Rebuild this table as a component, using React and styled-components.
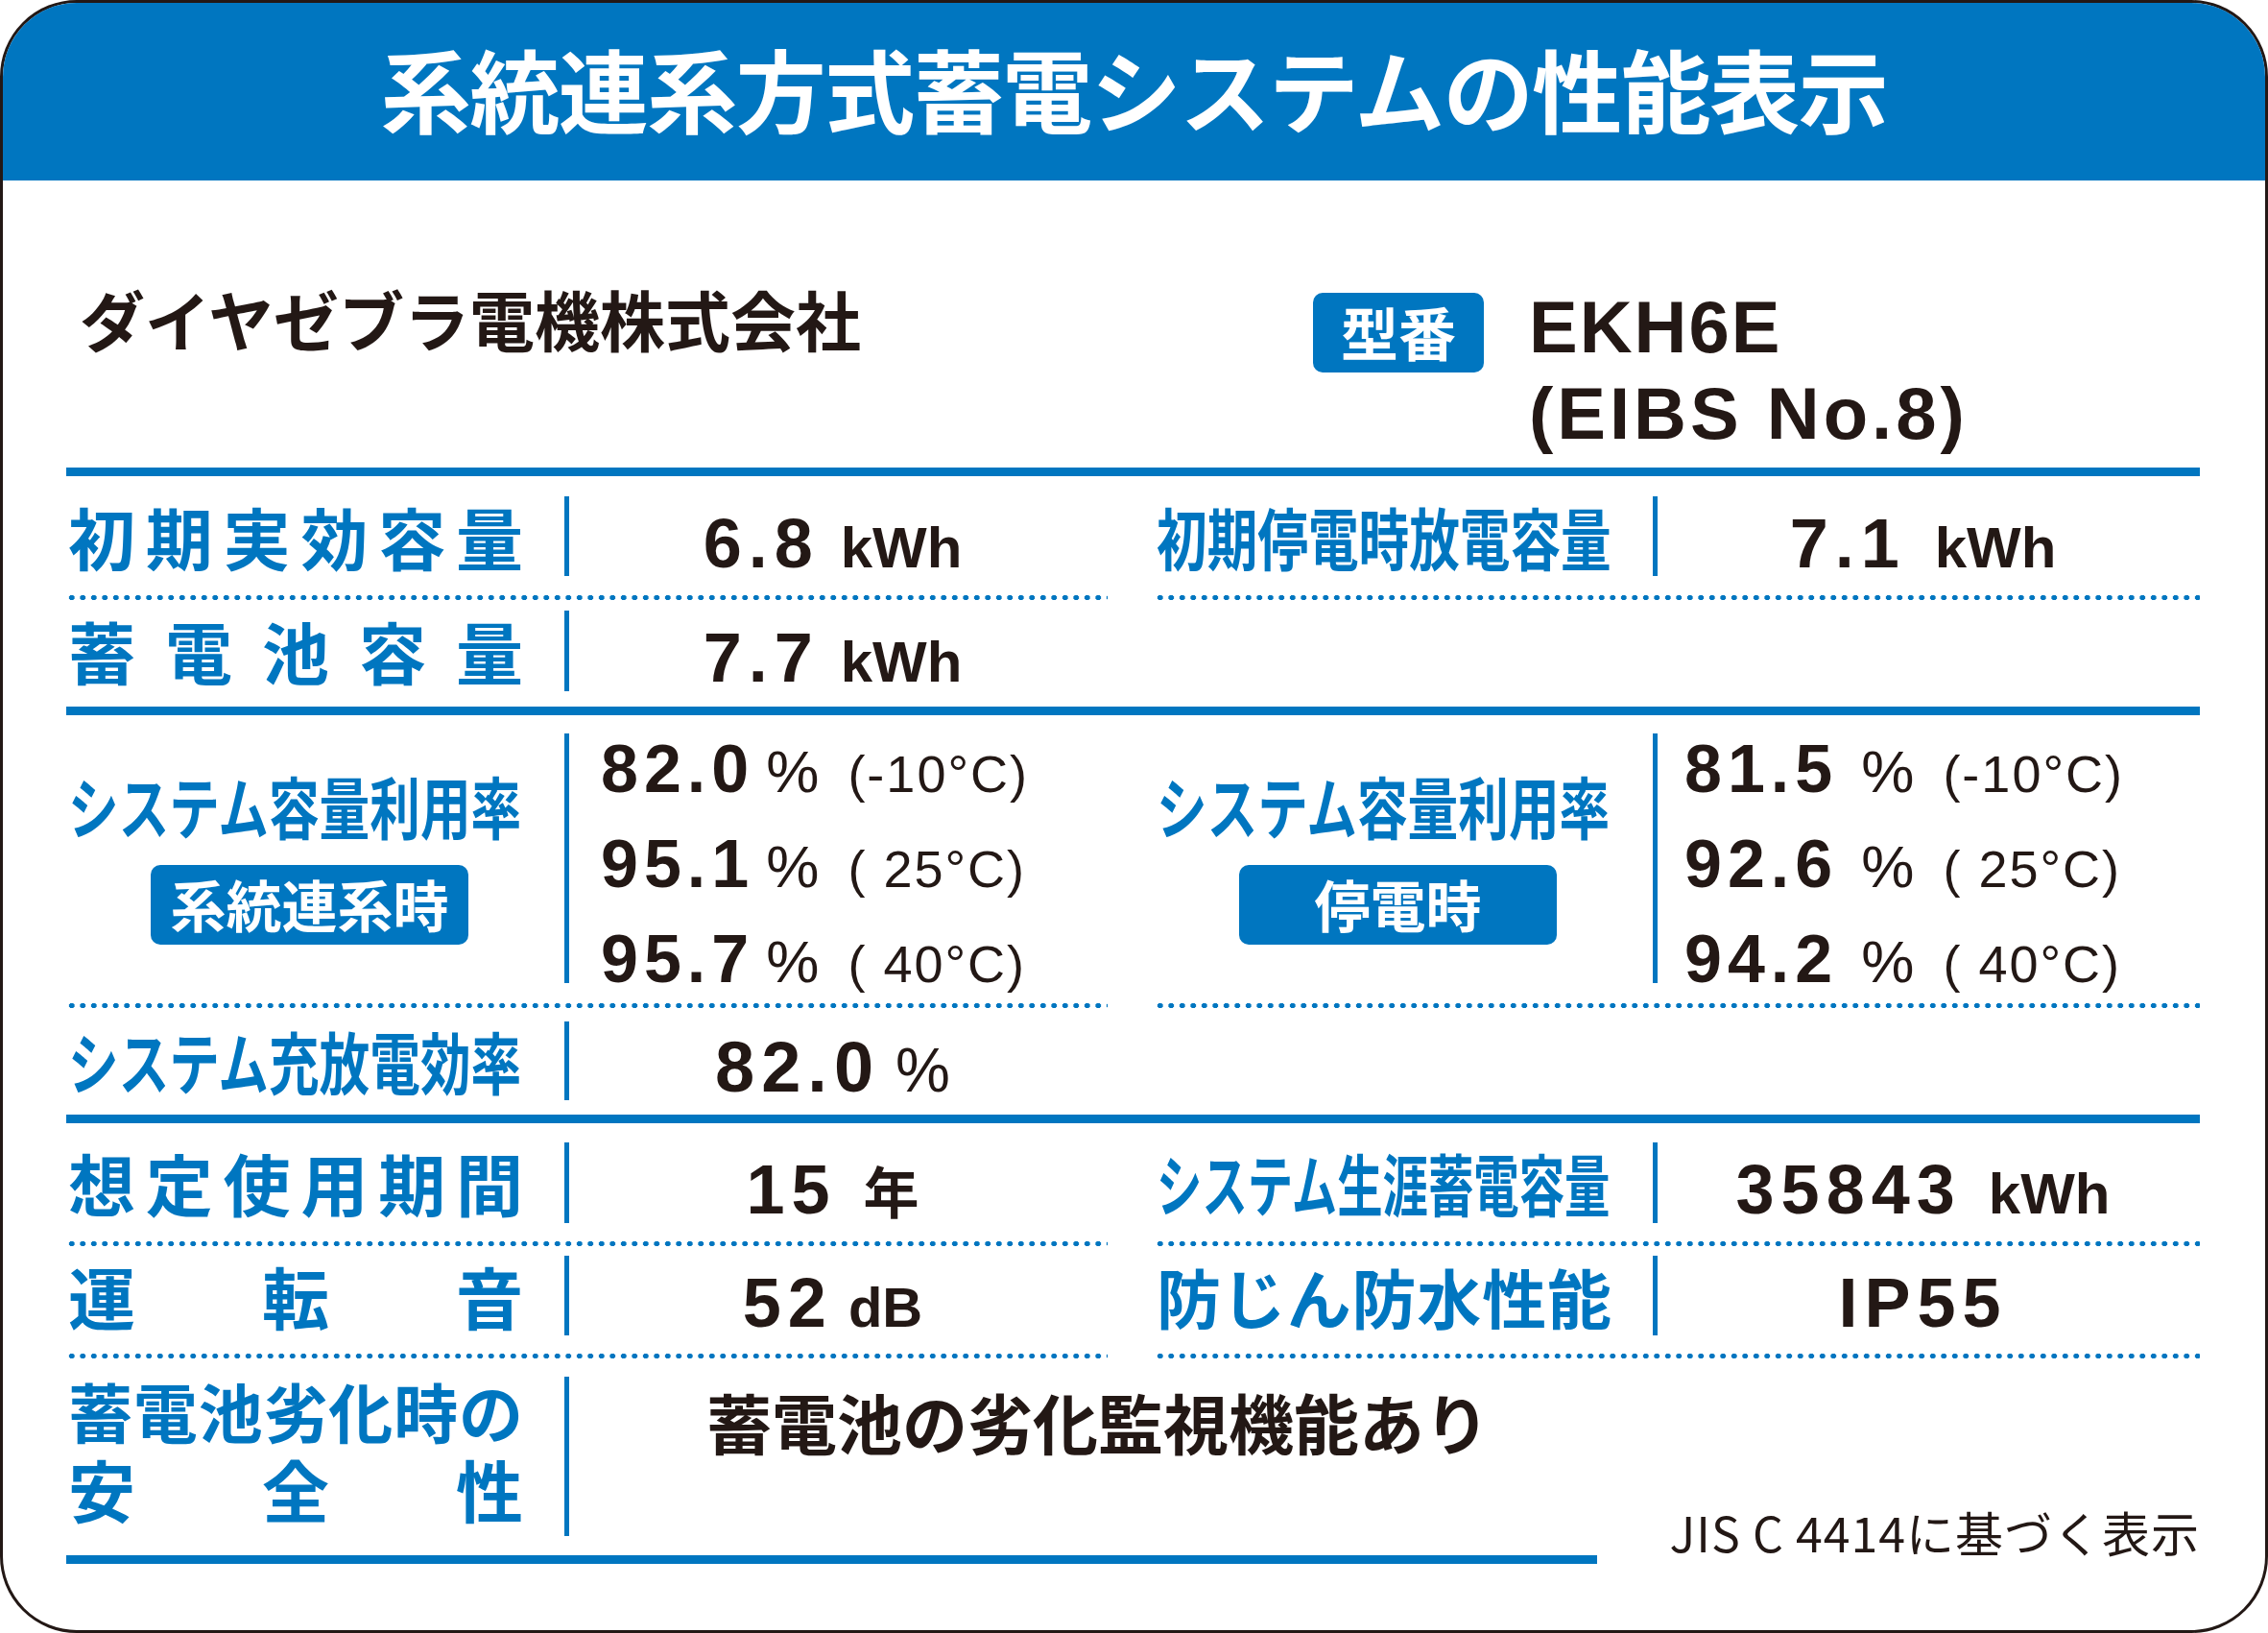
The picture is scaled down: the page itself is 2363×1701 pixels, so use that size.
import React from 'react'
import styled, { createGlobalStyle } from 'styled-components'

const BLUE = '#0076c0'
const INK = '#231815'
const CJK = '"Noto Sans CJK JP", "Noto Sans", sans-serif'
const LATIN = '"Liberation Sans", "Noto Sans CJK JP", sans-serif'

const Global = createGlobalStyle`
    html, body {
        margin: 0;
        padding: 0;
        background: #fff;
    }
    body {
        width: 2363px;
        height: 1701px;
        overflow: hidden;
    }
`

const Card = styled.div`
    width: 2363px;
    height: 1701px;
    box-sizing: border-box;
    border: 3px solid ${INK};
    border-radius: 80px;
    overflow: hidden;
    background: #fff;
    display: flex;
    flex-direction: column;
`

const Header = styled.header`
    height: 185px;
    flex-shrink: 0;
    background: ${BLUE};
    display: flex;
    align-items: center;
    justify-content: center;
    padding-bottom: 10px;
    box-sizing: border-box;
`

const Title = styled.h1`
    margin: 0;
    color: #fff;
    font-family: ${CJK};
    font-weight: 700;
    font-size: 94px;
    line-height: 1;
    letter-spacing: -1.5px;
    white-space: nowrap;
`

const Body = styled.div`
    padding: 0 68px 0 66px;
`

const Intro = styled.div`
    height: 299px;
    box-sizing: border-box;
    padding-top: 110px;
    display: grid;
    grid-template-columns: 1299px auto;
    align-items: start;
`

const Company = styled.div`
    margin-left: 14px;
    color: ${INK};
    font-family: ${CJK};
    font-weight: 700;
    font-size: 68px;
    line-height: 1;
    white-space: nowrap;
`

const Model = styled.div`
    display: flex;
    align-items: flex-start;
    gap: 47px;
`

const Badge = styled.div`
    width: ${p => p.$w}px;
    height: 83px;
    flex-shrink: 0;
    box-sizing: border-box;
    border-radius: 10px;
    background: ${BLUE};
    color: #fff;
    display: flex;
    align-items: center;
    justify-content: center;
    font-family: ${CJK};
    font-weight: 700;
    font-size: ${p => p.$size}px;
    line-height: 1;
    margin-top: ${p => p.$top || 0}px;
    margin-left: ${p => p.$left || 0}px;
    padding-bottom: 3px;
    white-space: nowrap;
`

const ModelName = styled.div`
    margin-top: -2px;
    color: ${INK};
    font-family: ${LATIN};
    font-weight: 700;
    font-size: 76px;
    line-height: 90px;
    white-space: nowrap;
`

const ModelLine = styled.div`
    letter-spacing: ${p => p.$spacing}px;
`

const Rule = styled.div`
    height: 9px;
    background: ${BLUE};
    width: ${p => (p.$w ? `${p.$w}px` : 'auto')};
`

const Section = styled.div`
    display: grid;
    grid-template-columns: 1085px 1089px;
    column-gap: 49px;
`

const Dots = styled.div`
    height: 5px;
    background-image: radial-gradient(circle, ${BLUE} 2.6px, transparent 3.1px);
    background-size: 11.5px 5px;
    background-repeat: repeat-x;
    background-position: left center;
`

const Row = styled.div`
    display: grid;
    grid-template-columns: 519px 5px 1fr;
    grid-template-rows: ${p => p.$h}px;
    padding: ${p => p.$pt}px 0 ${p => p.$pb}px;
    align-items: center;
`

const LastRow = styled(Row)`
    grid-template-rows: 166px 20px;
`

const Divider = styled.div`
    grid-column: 2;
    grid-row: 1;
    align-self: stretch;
    background: ${BLUE};
`

const Label = styled.div`
    grid-column: 1;
    width: 474px;
    margin-left: 2px;
    display: flex;
    justify-content: space-between;
    color: ${BLUE};
    font-family: ${CJK};
    font-weight: 700;
    font-size: ${p => p.$size || 70}px;
    line-height: 1;
    white-space: nowrap;
`

const Squeeze = styled.span`
    display: inline-block;
    transform: scaleX(${p => p.$x});
    transform-origin: left center;
`

const LabelStack = styled.div`
    grid-column: 1;
    grid-row: 1;
    align-self: start;
    margin-top: 1px;
    display: flex;
    flex-direction: column;
    gap: 14px;
`

const LabelGroup = styled.div`
    grid-column: 1;
    display: flex;
    flex-direction: column;
    align-items: flex-start;
    gap: 27px;
`

const Value = styled.div`
    grid-column: 3;
    display: flex;
    justify-content: center;
    align-items: baseline;
    padding-top: 14px;
    padding-right: 12px;
    color: ${INK};
    font-family: ${LATIN};
    white-space: nowrap;
`

const Num = styled.span`
    font-weight: 700;
    font-size: ${p => p.$size || 72}px;
    line-height: 1;
    letter-spacing: ${p => (p.$spacing != null ? p.$spacing : 7)}px;
`

const Unit = styled.span`
    font-family: ${p => (p.$cjk ? CJK : LATIN)};
    font-weight: ${p => (p.$light ? 400 : 700)};
    font-size: ${p => p.$size || 60}px;
    line-height: 1;
    margin-left: ${p => p.$gap || 22}px;
`

const Lines = styled.div`
    grid-column: 3;
    align-self: start;
    margin-top: -10px;
    padding-left: ${p => p.$pad}px;
    color: ${INK};
    font-family: ${LATIN};
    font-size: 70px;
    white-space: nowrap;
`

const Line = styled.div`
    line-height: 94px;
`

const Temp = styled.span`
    font-weight: 400;
    font-size: 54px;
    letter-spacing: 2px;
    margin-left: 30px;
`

const Remark = styled.div`
    grid-column: 3;
    grid-row: 1 / span 2;
    align-self: stretch;
    display: flex;
    flex-direction: column;
`

const RemarkText = styled.div`
    margin: 13px 0 0 143px;
    color: ${INK};
    font-family: ${CJK};
    font-weight: 700;
    font-size: 68px;
    line-height: 1;
    white-space: nowrap;
`

const Note = styled.div`
    margin-top: auto;
    align-self: flex-end;
    color: ${INK};
    font-family: ${CJK};
    font-weight: 400;
    font-size: 50px;
    line-height: 1;
    letter-spacing: 1px;
    white-space: nowrap;
`

function spread(text) {
    return [...text].map((c, i) => <span key={i}>{c}</span>)
}

function SimpleRow({ label, squeeze, size, pt, h, pb, children }) {
    return (
        <Row $pt={pt} $h={h} $pb={pb}>
            <Label $size={size}>
                {squeeze ? <Squeeze $x={squeeze}>{label}</Squeeze> : spread(label)}
            </Label>
            <Divider />
            {children}
        </Row>
    )
}

function Rate({ mode, pad, lines }) {
    return (
        <Row $pt={19} $h={260} $pb={21}>
            <LabelGroup>
                <Label>
                    <Squeeze $x={0.752}>システム容量利用率</Squeeze>
                </Label>
                <Badge $w={331} $size={58} $left={88}>{mode}</Badge>
            </LabelGroup>
            <Divider />
            <Lines $pad={pad}>
                {lines.map(l => (
                    <Line key={l.n}>
                        <Num $size={70} $spacing={6}>{l.n}</Num>
                        <Unit $light $size={62} $gap={l.gap}>%</Unit>
                        <Temp>{l.t}</Temp>
                    </Line>
                ))}
            </Lines>
        </Row>
    )
}

export default function App() {
    return (
        <>
            <Global />
            <Card>
                <Header>
                    <Title>系統連系方式蓄電システムの性能表示</Title>
                </Header>
                <Body>
                    <Intro>
                        <Company>ダイヤゼブラ電機株式会社</Company>
                        <Model>
                            <Badge $w={178} $size={60} $top={7}>型番</Badge>
                            <ModelName>
                                <ModelLine $spacing={2}>EKH6E</ModelLine>
                                <ModelLine $spacing={4}>(EIBS No.8)</ModelLine>
                            </ModelName>
                        </Model>
                    </Intro>

                    <Rule />
                    <Section>
                        <SimpleRow label="初期実効容量" pt={21} h={83} pb={20}>
                            <Value>
                                <Num>6.8</Num>
                                <Unit>kWh</Unit>
                            </Value>
                        </SimpleRow>
                        <SimpleRow label="初期停電時放電容量" squeeze={0.752} pt={21} h={83} pb={20}>
                            <Value>
                                <Num>7.1</Num>
                                <Unit $gap={30}>kWh</Unit>
                            </Value>
                        </SimpleRow>
                        <Dots />
                        <Dots />
                        <SimpleRow label="蓄電池容量" pt={11} h={84} pb={16}>
                            <Value>
                                <Num>7.7</Num>
                                <Unit>kWh</Unit>
                            </Value>
                        </SimpleRow>
                        <div />
                    </Section>

                    <Rule />
                    <Section>
                        <Rate
                            mode="系統連系時"
                            pad={33}
                            lines={[
                                { n: '82.0', gap: 12, t: '(-10°C)' },
                                { n: '95.1', gap: 12, t: '( 25°C)' },
                                { n: '95.7', gap: 12, t: '( 40°C)' },
                            ]}
                        />
                        <Rate
                            mode="停電時"
                            pad={28}
                            lines={[
                                { n: '81.5', gap: 24, t: '(-10°C)' },
                                { n: '92.6', gap: 24, t: '( 25°C)' },
                                { n: '94.2', gap: 24, t: '( 40°C)' },
                            ]}
                        />
                        <Dots />
                        <Dots />
                        <SimpleRow label="システム充放電効率" squeeze={0.752} pt={14} h={82} pb={15}>
                            <Value>
                                <Num $size={74}>82.0</Num>
                                <Unit $light $size={64} $gap={16}>%</Unit>
                            </Value>
                        </SimpleRow>
                        <div />
                    </Section>

                    <Rule />
                    <Section>
                        <SimpleRow label="想定使用期間" pt={20} h={84} pb={19}>
                            <Value>
                                <Num>15</Num>
                                <Unit $cjk $size={58} $gap={28}>年</Unit>
                            </Value>
                        </SimpleRow>
                        <SimpleRow label="システム生涯蓄電容量" squeeze={0.677} pt={20} h={84} pb={19}>
                            <Value>
                                <Num>35843</Num>
                                <Unit $gap={28}>kWh</Unit>
                            </Value>
                        </SimpleRow>
                        <Dots />
                        <Dots />
                        <SimpleRow label="運転音" pt={10} h={83} pb={19}>
                            <Value>
                                <Num>52</Num>
                                <Unit $size={58} $gap={16}>dB</Unit>
                            </Value>
                        </SimpleRow>
                        <SimpleRow label="防じん防水性能" size={67} pt={10} h={83} pb={19}>
                            <Value>
                                <Num>IP55</Num>
                            </Value>
                        </SimpleRow>
                        <Dots />
                        <Dots />
                    </Section>

                    <LastRow $pt={19} $pb={0}>
                        <LabelStack>
                            <Label $size={67}>{spread('蓄電池劣化時の')}</Label>
                            <Label>{spread('安全性')}</Label>
                        </LabelStack>
                        <Divider />
                        <Remark>
                            <RemarkText>蓄電池の劣化監視機能あり</RemarkText>
                            <Note>JIS C 4414に基づく表示</Note>
                        </Remark>
                    </LastRow>
                    <Rule $w={1595} />
                </Body>
            </Card>
        </>
    )
}
